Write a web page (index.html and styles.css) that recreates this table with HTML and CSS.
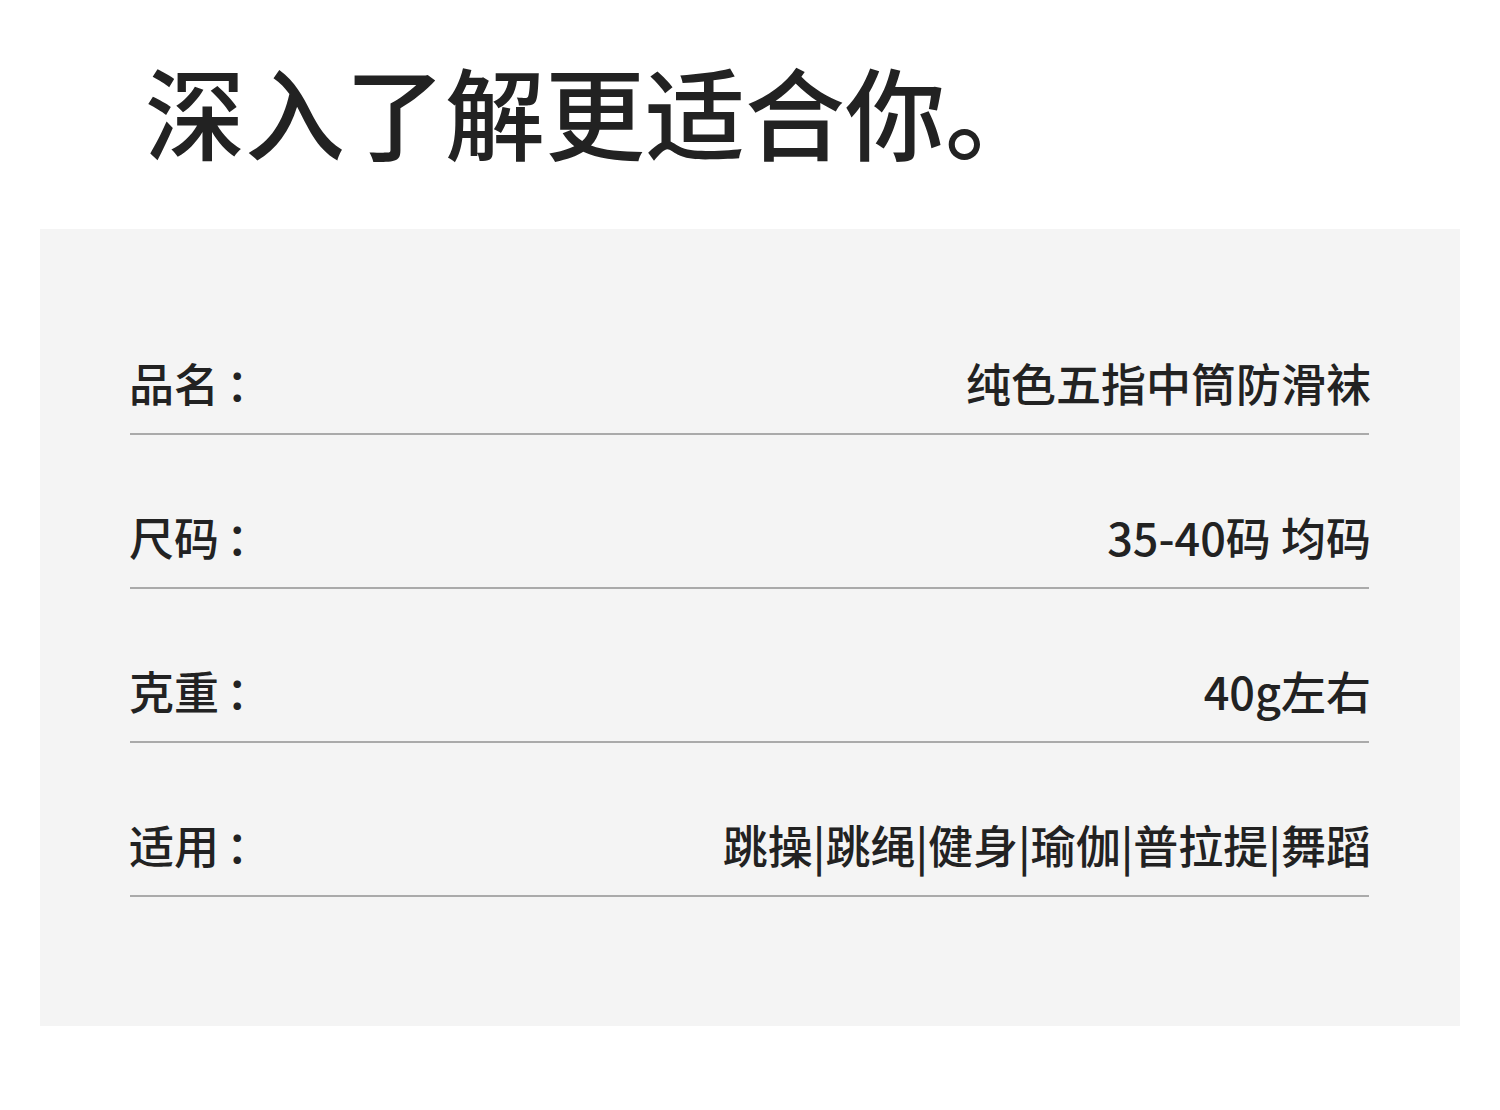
FILE: index.html
```html
<!DOCTYPE html>
<html lang="zh-CN">
<head>
<meta charset="utf-8">
<link rel="stylesheet" href="styles.css">
</head>
<body>
<header class="head">
  <h1 class="title">深入了解更适合你。</h1>
</header>
<section class="panel">
  <div class="row"><span class="label">品名<span class="colon">：</span></span><span class="value">纯色五指中筒防滑袜</span></div>
  <div class="row"><span class="label">尺码<span class="colon">：</span></span><span class="value">35-40码 均码</span></div>
  <div class="row"><span class="label">克重<span class="colon">：</span></span><span class="value">40g左右</span></div>
  <div class="row"><span class="label">适用<span class="colon">：</span></span><span class="value">跳操|跳绳|健身|瑜伽|普拉提|舞蹈</span></div>
</section>
</body>
</html>
```
FILE: styles.css
```css
html, body {
  margin: 0;
  padding: 0;
  background: #ffffff;
}
body {
  width: 1500px;
  height: 1110px;
  font-family: "Noto Sans CJK SC", "Noto Sans", sans-serif;
  color: #222222;
}
.head {
  height: 229px;
  padding-left: 145px;
  box-sizing: border-box;
}
.title {
  margin: 0;
  padding-top: 55px;
  font-size: 100px;
  line-height: 110px;
  font-weight: 500;
  color: #222222;
}
.panel {
  margin: 0 40px;
  height: 797px;
  box-sizing: border-box;
  background: #f4f4f4;
  padding: 52px 91px 0 90px;
}
.row {
  display: flex;
  justify-content: space-between;
  align-items: center;
  padding: 72px 0 20px;
  line-height: 60px;
  font-size: 45px;
  font-weight: 500;
  border-bottom: 2px solid #aaaaaa;
}
.label {
  margin-left: -1px;
}
.colon {
  margin-left: 7px;
}
.value {
  margin-right: -2px;
}
```
